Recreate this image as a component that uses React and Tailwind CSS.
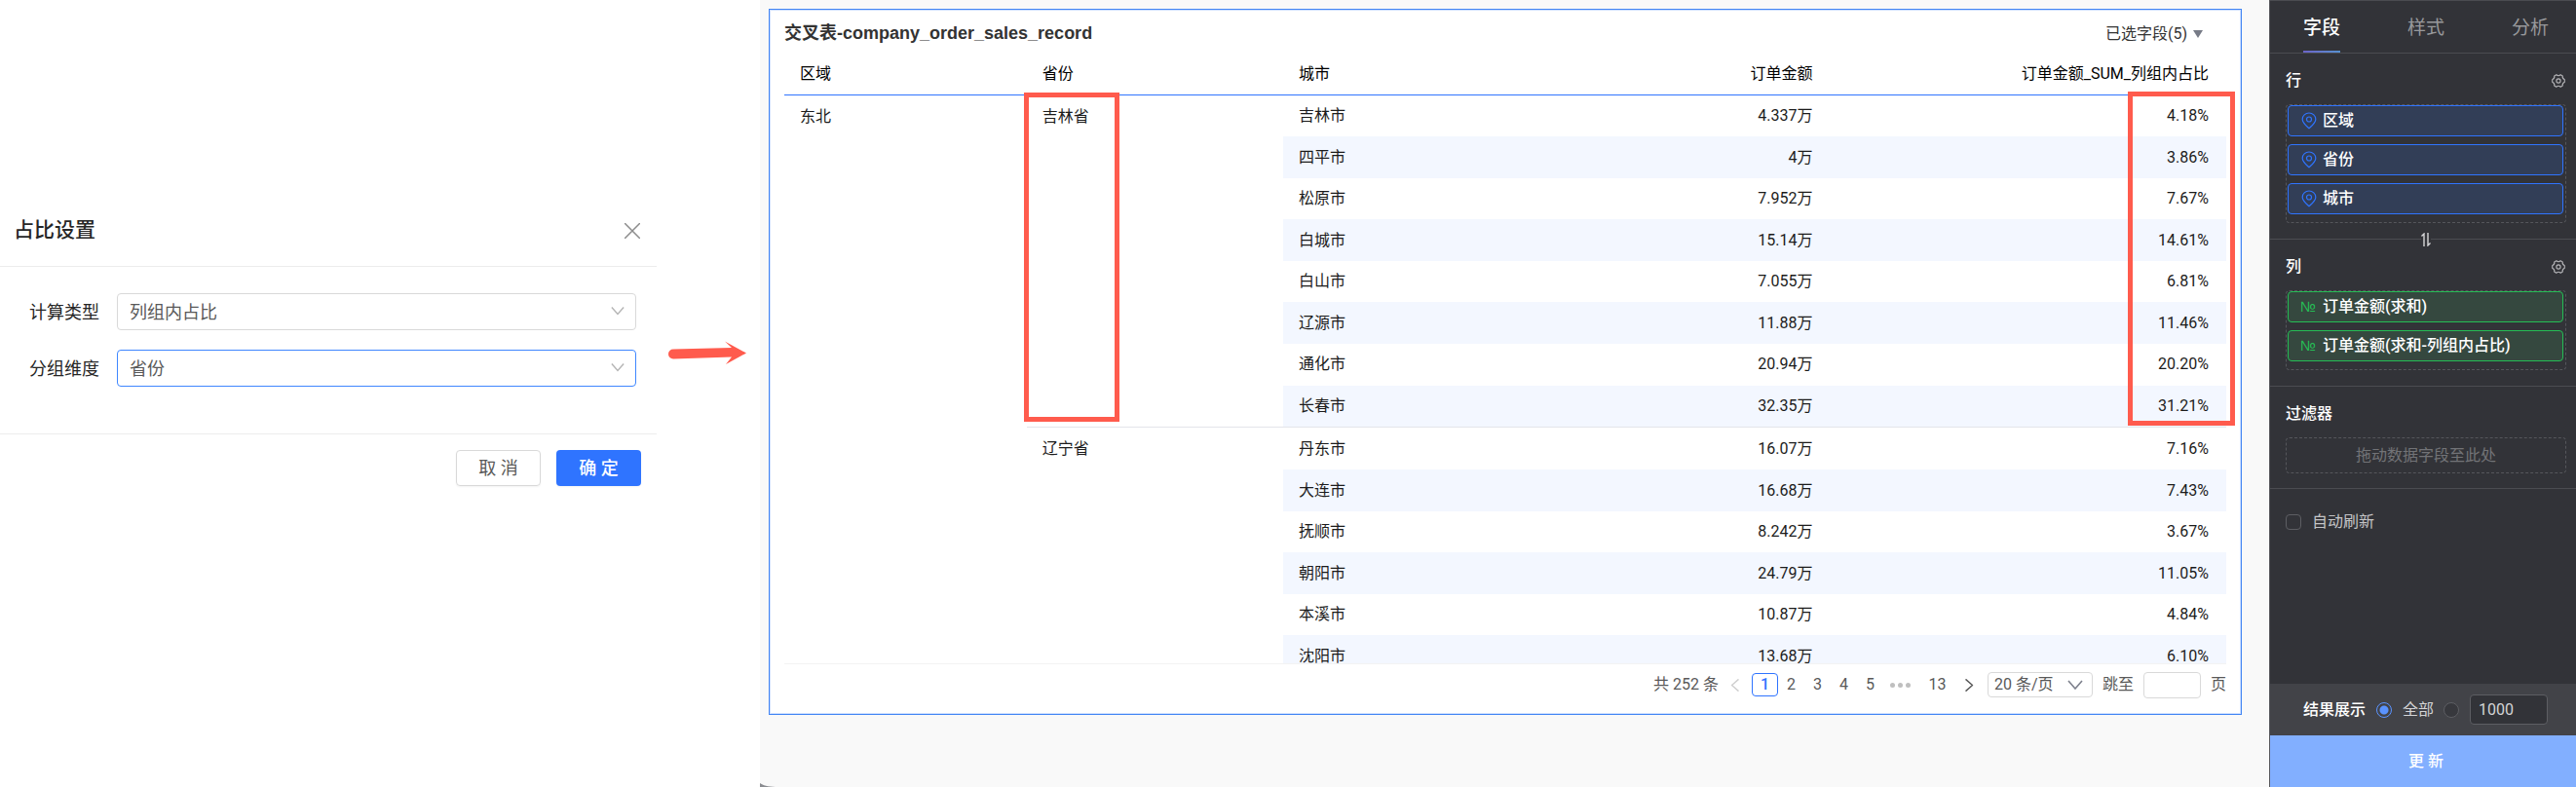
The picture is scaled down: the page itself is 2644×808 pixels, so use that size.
import React, { useState } from "react";

const groups = [
  {
    province: "吉林省",
    rows: [
      ["吉林市", "4.337万", "4.18%"],
      ["四平市", "4万", "3.86%"],
      ["松原市", "7.952万", "7.67%"],
      ["白城市", "15.14万", "14.61%"],
      ["白山市", "7.055万", "6.81%"],
      ["辽源市", "11.88万", "11.46%"],
      ["通化市", "20.94万", "20.20%"],
      ["长春市", "32.35万", "31.21%"],
    ],
  },
  {
    province: "辽宁省",
    rows: [
      ["丹东市", "16.07万", "7.16%"],
      ["大连市", "16.68万", "7.43%"],
      ["抚顺市", "8.242万", "3.67%"],
      ["朝阳市", "24.79万", "11.05%"],
      ["本溪市", "10.87万", "4.84%"],
      ["沈阳市", "13.68万", "6.10%"],
    ],
  },
];

const Chevron = ({ className }) => (
  <svg viewBox="0 0 16 10" fill="none" stroke="currentColor" strokeWidth="1.6" className={className}>
    <path d="M1 1l7 8 7-8" />
  </svg>
);

const GearIcon = () => (
  <svg viewBox="0 0 16 16" fill="none" stroke="currentColor" strokeWidth="1.3" strokeLinejoin="round" className="size-[14px]">
    <path d="M5.5 0.900c1.400 1.200 3.600 1.200 5 0l2.300 1.400c-.3 1.900.7 3.500 2.400 4.200v3c-1.700.7-2.700 2.300-2.400 4.200l-2.300 1.400c-1.400-1.200-3.600-1.200-5 0l-2.300-1.400c.3-1.900-.7-3.500-2.400-4.200v-3c1.700-.7 2.700-2.300 2.400-4.200z" />
    <circle cx="8" cy="8" r="2.400" />
  </svg>
);

const PinIcon = () => (
  <svg viewBox="0 0 16 18" fill="none" stroke="currentColor" strokeWidth="1.2" className="w-4 h-[18px] text-[#2f74ff]">
    <path d="M8 16.800C4.500 13.600 1.200 10.800 1.200 7.400a6.800 6.400 0 0 1 13.600 0c0 3.400-3.300 6.200-6.800 9.400z" />
    <circle cx="8" cy="7.500" r="2.500" />
  </svg>
);

const SelectField = ({ id, label, value, active }) => (
  <div className="flex items-center pl-[30px] pr-[21px]">
    <label htmlFor={id} className="w-[90px] text-[18px] text-[#262626]">
      {label}
    </label>
    <div className="relative flex-1">
      <select
        id={id}
        className={`w-full h-[38px] appearance-none bg-white border rounded-sm pl-3 text-[18px] text-[#595959] ${
          active ? "border-[#3f87ff]" : "border-[#d9d9d9]"
        }`}
      >
        <option>{value}</option>
      </select>
      <Chevron className="absolute right-3 top-[13px] w-[14px] h-[10px] text-[#b4b4b4] pointer-events-none" />
    </div>
  </div>
);

const RatioDialog = () => (
  <section className="w-[674px] shrink-0 pt-[200px]">
    <header className="flex items-center justify-between h-[74px] pl-[14px] pr-[17px] border-b border-[#ececec]">
      <h2 className="text-[21px] font-medium text-[#262626]">占比设置</h2>
      <button aria-label="关闭" className="text-[#8c8c8c]">
        <svg viewBox="0 0 16 16" stroke="currentColor" strokeWidth="1.5" className="w-4 h-4">
          <path d="M0 0l16 16M16 0L0 16" />
        </svg>
      </button>
    </header>
    <div className="flex flex-col gap-5 pt-[27px] h-[171px]">
      <SelectField id="calc-type" label="计算类型" value="列组内占比" />
      <SelectField id="group-dim" label="分组维度" value="省份" active />
    </div>
    <footer className="flex justify-end gap-4 pt-4 pr-4 border-t border-[#ececec]">
      <button className="w-[87px] h-[37px] border border-[#d9d9d9] rounded shadow-xs text-[18px] text-[#595959]">取 消</button>
      <button className="w-[87px] h-[37px] rounded bg-[#2f74ff] shadow-xs text-[18px] font-medium text-white">确 定</button>
    </footer>
  </section>
);

const CrossTable = () => (
  <table className="w-full h-[640px] table-fixed text-[16px] text-[#1c1c1c]">
    <colgroup>
      <col className="w-[16.8%]" />
      <col className="w-[17.8%]" />
      <col className="w-[17.8%]" />
      <col className="w-[20%]" />
      <col />
    </colgroup>
    <thead>
      <tr className="h-[42px] border-b border-[#2f74ff] text-black">
        <th className="h-[42px] pl-4 text-left font-normal">区域</th>
        <th className="pl-4 text-left font-normal">省份</th>
        <th className="pl-4 text-left font-normal">城市</th>
        <th className="pr-4 text-right font-normal">订单金额</th>
        <th className="pr-[18px] text-right font-normal">订单金额_SUM_列组内占比</th>
      </tr>
    </thead>
    <tbody>
      {groups.map((group, g) =>
        group.rows.map(([city, amount, ratio], i) => {
          const last = g === 0 && i === group.rows.length - 1;
          const cell = `${i % 2 ? "bg-[#f3f7ff]" : ""} ${last ? "border-b border-[#e3e5ea]" : ""}`;

          return (
            <tr key={city}>
              {g === 0 && i === 0 && (
                <td rowSpan={14} className="pl-4 pt-[10px] align-top">
                  东北
                </td>
              )}
              {i === 0 && (
                <td
                  rowSpan={group.rows.length}
                  className={`relative pl-4 pt-[10px] align-top ${g === 0 ? "border-b border-[#e3e5ea]" : ""}`}
                >
                  {group.province}
                  {g === 0 && (
                    <span className="absolute -left-[3px] -top-[3px] bottom-[5px] w-[98px] border-5 border-[#ff5b4d]" />
                  )}
                </td>
              )}
              <td className={`pl-4 ${cell}`}>{city}</td>
              <td className={`pr-4 text-right ${cell}`}>{amount}</td>
              <td className={`pr-[18px] text-right ${cell}`}>{ratio}</td>
            </tr>
          );
        })
      )}
    </tbody>
  </table>
);

const Pagination = () => {
  const [page, setPage] = useState(1);

  return (
    <nav className="flex items-center justify-end h-11 text-[16px] text-[#595959]">
      <span className="mr-[10px]">共 252 条</span>
      <button aria-label="上一页" className="mr-[10px] text-[#cfcfcf]">
        <Chevron className="w-[14px] h-[9px] rotate-90" />
      </button>
      {[1, 2, 3, 4, 5].map((n) => (
        <button
          key={n}
          onClick={() => setPage(n)}
          className={`w-[27px] h-6 leading-5 rounded-sm border ${
            n === page ? "border-[#2f74ff] text-[#2f74ff] font-medium" : "border-transparent"
          }`}
        >
          {n}
        </button>
      ))}
      <span className="flex gap-[3px] ml-[7px] mr-[14px]">
        <i className="size-[5px] rounded-full bg-[#bfbfbf]" />
        <i className="size-[5px] rounded-full bg-[#bfbfbf]" />
        <i className="size-[5px] rounded-full bg-[#bfbfbf]" />
      </span>
      <button className="w-[27px]">13</button>
      <button aria-label="下一页" className="mx-3">
        <Chevron className="w-[14px] h-[9px] -rotate-90" />
      </button>
      <span className="relative">
        <select aria-label="每页条数" className="w-[108px] h-[26px] appearance-none border border-[#d9d9d9] rounded-sm pl-[6px] leading-6">
          <option>20 条/页</option>
        </select>
        <Chevron className="absolute right-[10px] top-2 w-4 h-[10px] text-[#7d808c] pointer-events-none" />
      </span>
      <label htmlFor="jump" className="mx-[10px]">跳至</label>
      <input id="jump" className="w-[59px] h-[27px] border border-[#d9d9d9] rounded-sm mr-[10px]" />
      <span>页</span>
    </nav>
  );
};

const ReportPanel = () => (
  <main className="relative flex-1 min-w-0 bg-[#f9f9f9] pl-[9px] pr-7 pt-[9px]">
    <section className="h-[725px] px-[15px] bg-white border border-[#4285f4] shadow-[inset_0_0_0_1px_#cfe0ff]">
      <header className="flex items-center justify-between h-[45px] pt-1">
        <h1 className="text-[18px] font-bold text-[#333] font-['Liberation_Sans','Noto_Sans_CJK_SC',sans-serif]">
          交叉表-company_order_sales_record
        </h1>
        <button className="flex items-center gap-[6px] mr-6 text-[16px] text-[#333]">
          已选字段(5)
          <svg viewBox="0 0 10 8" className="w-[10px] h-2 fill-[#777b87]">
            <path d="M0 0h10L5 8z" />
          </svg>
        </button>
      </header>
      <div className="relative">
        <div className="h-[626px] overflow-hidden shadow-[0_1px_0_#f3f3f3]">
          <CrossTable />
        </div>
        {/* highlight round the ratio values */}
        <span className="absolute -right-[9px] top-[39px] w-[110px] h-[343px] border-5 border-[#ff5b4d]" />
      </div>
      <Pagination />
    </section>
    <svg viewBox="0 0 16 4" className="absolute left-0 bottom-0 w-4 h-1 fill-[#8a8c90]">
      <path d="M0 0c3 2.500 8 3.600 16 4H0z" />
    </svg>
  </main>
);

const tabs = ["字段", "样式", "分析"];

const FieldPanel = () => {
  const [tab, setTab] = useState("字段");

  return (
    <aside className="flex flex-col w-[315px] shrink-0 bg-[#323338] border-l border-[#55565b] text-[16px] text-white">
      <div className="flex justify-between h-[55px] pl-[34px] pr-[28px] border-y border-[#4b4c51]">
        {tabs.map((t) => (
          <button
            key={t}
            onClick={() => setTab(t)}
            className={`relative pt-[3px] text-[19px] ${t === tab ? "font-medium text-white" : "text-[#98999c]"}`}
          >
            {t}
            {t === tab && (
              <span className="absolute inset-x-0 bottom-0 h-[2px] bg-linear-to-r from-[#6a63c8] to-[#5590d0]" />
            )}
          </button>
        ))}
      </div>

      <section className="relative h-[191px] pl-4 pr-[10px] pt-4 border-b border-[#4b4c51]">
        <div className="flex items-center justify-between h-6 mb-3 pr-px">
          <h3 className="font-medium">行</h3>
          <button aria-label="行设置" className="text-[#b5b5b8]"><GearIcon /></button>
        </div>
        <ul className="flex flex-col gap-2 pl-px pr-[2px] pb-2 border border-dashed border-[#55565b] rounded">
          {["区域", "省份", "城市"].map((name) => (
            <li key={name} className="flex items-center gap-[6px] h-8 pl-[13px] border border-[#2f74ff] rounded bg-[#323e57] font-medium">
              <PinIcon />
              {name}
            </li>
          ))}
        </ul>
        <button aria-label="行列互换" className="absolute left-[51%] -bottom-2 -translate-x-1/2 bg-[#323338] text-[#d6d6d8]">
          <svg viewBox="0 0 10 14" fill="none" stroke="currentColor" strokeWidth="1.4" className="w-[10px] h-[14px]">
            <path d="M3 14V1L0.500 3.500M7 0v13l2.500-2.500" />
          </svg>
        </button>
      </section>

      <section className="h-[151px] pl-4 pr-[10px] pt-4 border-b border-[#4b4c51]">
        <div className="flex items-center justify-between h-6 mb-3 pr-px">
          <h3 className="font-medium">列</h3>
          <button aria-label="列设置" className="text-[#b5b5b8]"><GearIcon /></button>
        </div>
        <ul className="flex flex-col gap-2 pl-px pr-[2px] pb-2 border border-dashed border-[#55565b] rounded">
          {["订单金额(求和)", "订单金额(求和-列组内占比)"].map((name) => (
            <li key={name} className="flex items-center h-8 pl-3 border border-[#25bd55] rounded bg-[#35483f] font-medium">
              <span className="w-[23px] text-[15px] font-normal text-[#25bd55] font-['Liberation_Sans',sans-serif]">№</span>
              {name}
            </li>
          ))}
        </ul>
      </section>

      <section className="h-[105px] pl-4 pr-[10px] pt-4 border-b border-[#4b4c51]">
        <h3 className="h-6 mb-3 font-medium">过滤器</h3>
        <div className="h-[37px] leading-[35px] text-center border border-dashed border-[#55565b] rounded text-[#727377]">
          拖动数据字段至此处
        </div>
      </section>

      <label className="flex items-center gap-[11px] h-[68px] pl-4 text-[#c4c4c6]">
        <input type="checkbox" className="size-4 appearance-none border border-[#5d5e63] rounded-sm" />
        自动刷新
      </label>

      <div className="flex items-center h-[53px] mt-auto pl-[34px] bg-[#424348]">
        <span className="mr-[11px] font-medium">结果展示</span>
        <label className="flex items-center gap-[11px] mr-[10px] text-[#d4d4d6]">
          <input
            type="radio"
            name="limit"
            defaultChecked
            className="size-4 appearance-none border border-[#5a93ff] rounded-full bg-[radial-gradient(circle,#5a93ff_4px,transparent_5px)]"
          />
          全部
        </label>
        <input type="radio" name="limit" aria-label="限制条数" className="size-4 appearance-none border border-[#5d5e63] rounded-full bg-[#37383d]" />
        <input
          aria-label="条数"
          defaultValue="1000"
          className="w-20 h-[31px] ml-[11px] px-2 border border-[#5d5e63] rounded bg-[#323338] text-[#d4d4d6]"
        />
      </div>
      <button className="h-[53px] pl-[6px] bg-[#82afff] font-medium">更 新</button>
    </aside>
  );
};

const App = () => {
  return (
    <div className="flex min-h-screen bg-white font-[Roboto,'Noto_Sans_CJK_SC',sans-serif]">
      <RatioDialog />
      <div className="w-[106px] shrink-0 pl-3 pt-[350px]">
        <svg viewBox="0 0 80 24" className="w-20 h-6 fill-[#ff5b4d]">
          <path d="M5 8.500l60-1.500-7-6.500L80 12.500 59 24l6-7.500-60 2a5 5 0 0 1 0-10z" />
        </svg>
      </div>
      <ReportPanel />
      <FieldPanel />
    </div>
  );
};

export default App;
